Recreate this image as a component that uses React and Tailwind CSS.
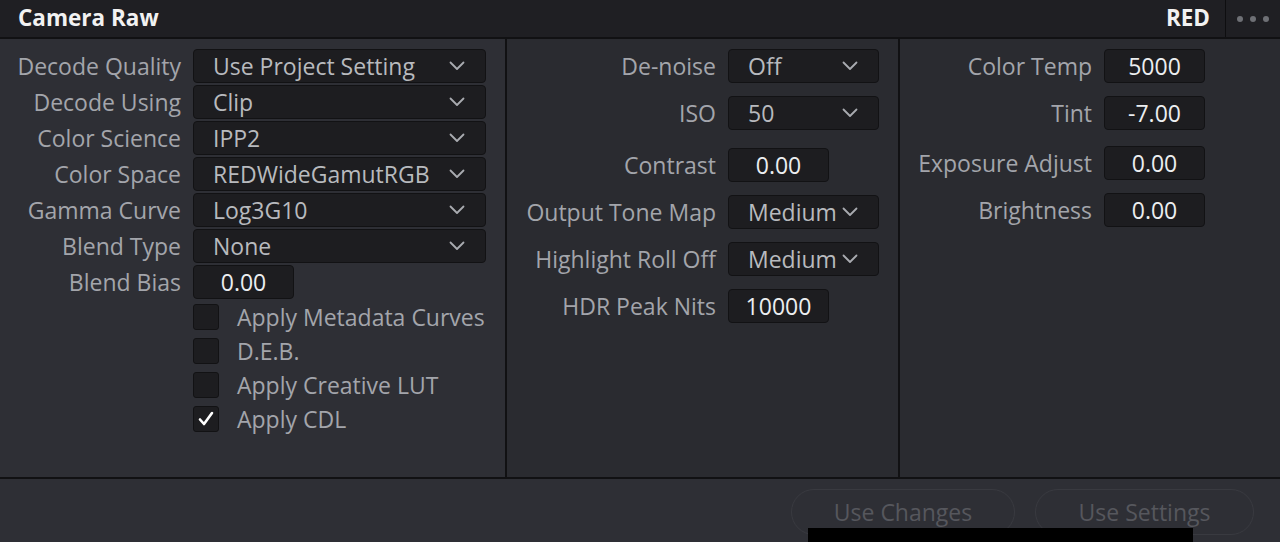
const font = { fontFamily: '"Open Sans", "Noto Sans", sans-serif' };

function Chevron() {
  return (
    <svg width="16" height="10" viewBox="0 0 16 10" fill="none">
      <path d="M1.5 1.5 L8 8 L14.5 1.5" stroke="#a9abb0" strokeWidth="1.8" strokeLinecap="round" strokeLinejoin="round" />
    </svg>
  );
}

function Select({ value, w = "w-[293px]" }) {
  return (
    <div className={`${w} h-[34px] flex items-center justify-between pl-[19px] pr-[20px] bg-[#1d1d20] border border-[#121214] rounded-[4px] text-[#b8babe]`}>
      <span className="leading-none">{value}</span>
      <Chevron />
    </div>
  );
}

function Field({ value }) {
  return (
    <div className="w-[101px] h-[34px] flex items-center justify-center bg-[#1d1d20] border border-[#121214] rounded-[4px] text-[#eceef0]">
      <span className="leading-none">{value}</span>
    </div>
  );
}

function Row({ label, labelW, children, className = "" }) {
  return (
    <div className={`flex items-center gap-[12px] ${className}`}>
      <div className={`${labelW} text-right text-[#a3a5ab] leading-none whitespace-nowrap`}>{label}</div>
      {children}
    </div>
  );
}

function Check({ label, checked }) {
  return (
    <div className="h-[34px] flex items-center gap-[18px] pl-[193px]">
      <div className="w-[26px] h-[26px] bg-[#1d1d20] border border-[#121214] rounded-[3px] flex items-center justify-center">
        {checked && (
          <svg width="18" height="18" viewBox="0 0 18 18" fill="none">
            <path d="M3 9.5 L7 14 L15 3" stroke="#ffffff" strokeWidth="2.6" strokeLinecap="round" strokeLinejoin="round" />
          </svg>
        )}
      </div>
      <span className="text-[#a3a5ab] leading-none">{label}</span>
    </div>
  );
}

function MediumSelect() {
  return (
    <div className="w-[151px] h-[34px] flex items-center pl-[19px] gap-[5px] bg-[#1d1d20] border border-[#121214] rounded-[4px] text-[#b8babe]">
      <span className="leading-none">Medium</span>
      <Chevron />
    </div>
  );
}

export default function App() {
  const left = [
    ["Decode Quality", "Use Project Setting"],
    ["Decode Using", "Clip"],
    ["Color Science", "IPP2"],
    ["Color Space", "REDWideGamutRGB"],
    ["Gamma Curve", "Log3G10"],
    ["Blend Type", "None"],
  ];

  return (
    <div className="w-[1280px] h-[542px] bg-[#2e2f35] flex flex-col overflow-hidden relative text-[23px]" style={font}>
      {/* header */}
      <div className="h-[39px] shrink-0 flex items-center bg-[#1f1f23] border-b-2 border-[#111113]">
        <div className="flex-1 pl-[18px] font-bold text-[22.5px] leading-none text-[#f2f2f2]">Camera Raw</div>
        <div className="pr-[15px] font-bold text-[22.5px] leading-none text-[#f2f2f2]">RED</div>
        <div className="h-full w-px bg-[#0e0e10]" />
        <div className="w-[54px] flex items-center justify-center gap-[7px]">
          <span className="w-[6px] h-[6px] rounded-full bg-[#6e7075]" />
          <span className="w-[6px] h-[6px] rounded-full bg-[#6e7075]" />
          <span className="w-[6px] h-[6px] rounded-full bg-[#6e7075]" />
        </div>
      </div>

      {/* content */}
      <div className="h-[440px] shrink-0 flex border-b-2 border-[#111113]">
        <div className="w-[505px] shrink-0 pt-[10px] flex flex-col">
          <div className="flex flex-col gap-[2px]">
            {left.map(([l, v]) => (
              <Row key={l} label={l} labelW="w-[181px]">
                <Select value={v} />
              </Row>
            ))}
            <Row label="Blend Bias" labelW="w-[181px]">
              <Field value="0.00" />
            </Row>
          </div>
          <div className="flex flex-col mt-[1px]">
            <Check label="Apply Metadata Curves" />
            <Check label="D.E.B." />
            <Check label="Apply Creative LUT" />
            <Check label="Apply CDL" checked />
          </div>
        </div>
        <div className="w-[2px] bg-[#111113]" />
        <div className="w-[391px] shrink-0 bg-[#2a2b30] pt-[10px] flex flex-col gap-[13px]">
          <Row label="De-noise" labelW="w-[209px]">
            <Select value="Off" w="w-[151px]" />
          </Row>
          <Row label="ISO" labelW="w-[209px]">
            <Select value="50" w="w-[151px]" />
          </Row>
          <Row label="Contrast" labelW="w-[209px]" className="mt-[5px]">
            <Field value="0.00" />
          </Row>
          <Row label="Output Tone Map" labelW="w-[209px]">
            <MediumSelect />
          </Row>
          <Row label="Highlight Roll Off" labelW="w-[209px]">
            <MediumSelect />
          </Row>
          <Row label="HDR Peak Nits" labelW="w-[209px]">
            <Field value="10000" />
          </Row>
        </div>
        <div className="w-[2px] bg-[#111113]" />
        <div className="flex-1 bg-[#2a2b30] pt-[10px] flex flex-col gap-[13px]">
          <Row label="Color Temp" labelW="w-[192px]">
            <Field value="5000" />
          </Row>
          <Row label="Tint" labelW="w-[192px]">
            <Field value="-7.00" />
          </Row>
          <Row label="Exposure Adjust" labelW="w-[192px]" className="mt-[3px]">
            <Field value="0.00" />
          </Row>
          <Row label="Brightness" labelW="w-[192px]">
            <Field value="0.00" />
          </Row>
        </div>
      </div>

      {/* footer */}
      <div className="flex-1 flex justify-end items-start pt-[10px] pr-[26px] gap-[20px]">
        <div className="w-[224px] h-[46px] rounded-full border border-[#393a40] flex items-center justify-center text-[#56575d]">
          Use Changes
        </div>
        <div className="w-[219px] h-[46px] rounded-full border border-[#393a40] flex items-center justify-center text-[#56575d]">
          Use Settings
        </div>
      </div>
      <div className="absolute left-[808px] top-[528px] w-[385px] h-[14px] bg-black" />
    </div>
  );
}
